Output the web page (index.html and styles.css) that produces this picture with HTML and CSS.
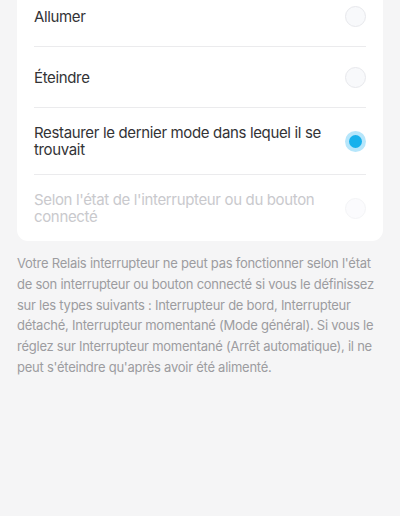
FILE: index.html
```html
<!DOCTYPE html>
<html lang="fr">
<head>
<meta charset="utf-8">
<link rel="stylesheet" href="styles.css">
</head>
<body>
<div class="page">
  <div class="card">
    <div class="row">
      <span class="label">Allumer</span>
      <span class="radio"></span>
    </div>
    <div class="row">
      <span class="label">Éteindre</span>
      <span class="radio"></span>
    </div>
    <div class="row">
      <span class="label">Restaurer le dernier mode dans lequel il se trouvait</span>
      <span class="radio checked"></span>
    </div>
    <div class="row disabled">
      <span class="label">Selon l'état de l'interrupteur ou du bouton connecté</span>
      <span class="radio"></span>
    </div>
  </div>
  <p class="note">Votre Relais interrupteur ne peut pas fonctionner selon l'état de son interrupteur ou bouton connecté si vous le définissez sur les types suivants : Interrupteur de bord, Interrupteur détaché, Interrupteur momentané (Mode général). Si vous le réglez sur Interrupteur momentané (Arrêt automatique), il ne peut s'éteindre qu'après avoir été alimenté.</p>
</div>
</body>
</html>
```
FILE: styles.css
```css
html, body {
  margin: 0;
  padding: 0;
  background: #f5f5f6;
}
body {
  width: 400px;
  height: 516px;
  overflow: hidden;
  font-family: Inter, "Liberation Sans", Arial, sans-serif;
}
.page {
  padding: 0 17px;
  margin-top: -14px;
}
.card {
  background: #ffffff;
  border-radius: 0 0 11px 11px;
  padding: 0 17px;
}
.row {
  display: flex;
  align-items: center;
  justify-content: space-between;
  min-height: 61px;
  box-sizing: border-box;
  padding: 16px 0;
  border-bottom: 1px solid #ebebed;
  gap: 20px;
}
.row:last-child {
  border-bottom: none;
  min-height: 66px;
  padding-bottom: 16px;
}
.label {
  font-size: 15px;
  line-height: 17px;
  color: #333336;
  letter-spacing: -0.35px;
}
.disabled .label {
  color: #c9c9cd;
}
.radio {
  flex: none;
  width: 21px;
  height: 21px;
  box-sizing: border-box;
  border-radius: 50%;
  border: 1px solid #e7e8ec;
  background: #f8f9fb;
}
.disabled .radio {
  border-color: #f3f4f6;
  background: #fbfbfd;
}
.radio.checked {
  border: none;
  background: #b6e6fb;
  display: flex;
  align-items: center;
  justify-content: center;
}
.radio.checked::after {
  content: "";
  width: 13px;
  height: 13px;
  border-radius: 50%;
  background: #17b1ec;
}
.note {
  margin: 12px 0 0;
  font-size: 13px;
  line-height: 20.8px;
  color: #9c9ca0;
  letter-spacing: -0.25px;
}
```
